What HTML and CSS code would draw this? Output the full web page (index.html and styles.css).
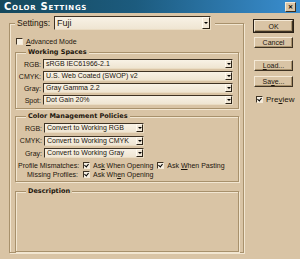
FILE: index.html
```html
<!DOCTYPE html>
<html lang="en">
<head>
    <meta charset="UTF-8">
    <title>Color Settings</title>
    <link rel="stylesheet" href="styles.css">
</head>
<body>
    <div class="titlebar">
        <span class="title">Color Settings</span>
        <span class="close-btn">&#x2715;</span>
    </div>

    <div class="dialog-body">
        <fieldset class="main-box">
            <legend class="settings-legend">
                <span class="settings-label">Settings:</span>
                <span class="select select-settings">Fuji<span class="arrow"></span></span>
            </legend>

            <div class="check-row advanced">
                <span class="checkbox"></span>
                <span><u>A</u>dvanced Mode</span>
            </div>

            <fieldset class="group">
                <legend>Working Spaces</legend>
                <div class="field-grid ws-grid">
                    <span class="field-label">RGB:</span>
                    <span class="select">sRGB IEC61966-2.1<span class="arrow"></span></span>
                    <span class="field-label">CMYK:</span>
                    <span class="select">U.S. Web Coated (SWOP) v2<span class="arrow"></span></span>
                    <span class="field-label">Gray:</span>
                    <span class="select">Gray Gamma 2.2<span class="arrow"></span></span>
                    <span class="field-label">Spot:</span>
                    <span class="select">Dot Gain 20%<span class="arrow"></span></span>
                </div>
            </fieldset>

            <fieldset class="group policies">
                <legend>Color Management Policies</legend>
                <div class="field-grid policy-grid">
                    <span class="field-label">RGB:</span>
                    <span class="select">Convert to Working RGB<span class="arrow"></span></span>
                    <span class="field-label">CMYK:</span>
                    <span class="select">Convert to Working CMYK<span class="arrow"></span></span>
                    <span class="field-label">Gray:</span>
                    <span class="select">Convert to Working Gray<span class="arrow"></span></span>
                </div>
                <div class="policy-checks">
                    <div class="policy-row">
                        <span class="policy-label">Profile Mismatches:</span>
                        <span class="checkbox checked"></span>
                        <span class="opt-text">As<u>k</u> When Opening</span>
                        <span class="checkbox checked"></span>
                        <span class="opt-text">Ask <u>W</u>hen Pasting</span>
                    </div>
                    <div class="policy-row">
                        <span class="policy-label">Missing Profiles:</span>
                        <span class="checkbox checked"></span>
                        <span class="opt-text">Ask Wh<u>e</u>n Opening</span>
                    </div>
                </div>
            </fieldset>

            <fieldset class="group description">
                <legend>Description</legend>
            </fieldset>
        </fieldset>

        <div class="buttons">
            <button class="btn btn-default">OK</button>
            <button class="btn">Cancel</button>
            <button class="btn btn-gap"><u>L</u>oad...</button>
            <button class="btn">Sa<u>v</u>e...</button>
            <div class="check-row preview">
                <span class="checkbox checked"></span>
                <span>Pre<u>v</u>iew</span>
            </div>
        </div>
    </div>
</body>
</html>
```

FILE: styles.css
```css
body {
    margin: 0;
    width: 300px;
    height: 259px;
    overflow: hidden;
    background: #d9c4a5;
    color: #1c150c;
    font-family: "Liberation Sans", Arial, sans-serif;
    font-size: 7px;
}
.titlebar {
    height: 13px;
    display: flex;
    align-items: center;
    justify-content: space-between;
    padding: 0 4px 0 4px;
    background: linear-gradient(to right, #15485c, #1c5b7e 45%, #3a8ed0);
}
.title {
    color: #fff;
    font-family: "DejaVu Sans", sans-serif;
    font-weight: bold;
    font-size: 10px;
    font-variant: small-caps;
    letter-spacing: 0.7px;
    line-height: 13px;
}
.close-btn {
    width: 9px;
    height: 8px;
    background: #d9c4a5;
    border: 1px solid;
    border-color: #f4e9d6 #3b2f20 #3b2f20 #f4e9d6;
    color: #000;
    font-size: 6px;
    font-weight: bold;
    line-height: 8px;
    text-align: center;
}
.dialog-body {
    display: flex;
    align-items: flex-start;
}
fieldset {
    margin: 0;
    min-width: 0;
    border: 1px solid #a8916c;
    box-shadow: inset 1px 1px 0 #f2e6d1, 1px 1px 0 #f2e6d1;
}
legend {
    padding: 0 2px;
    background: #d9c4a5;
}
.main-box {
    margin: 3px 0 0 9px;
    width: 235px;
    height: 237px;
    box-sizing: border-box;
    padding: 4px 4px 4px 5px;
}
.settings-legend {
    display: flex;
    align-items: center;
    gap: 4px;
    padding: 0 4px 0 2px;
    font-size: 8.5px;
}
.select {
    position: relative;
    display: block;
    height: 10px;
    box-sizing: border-box;
    padding: 0 10px 0 2px;
    border: 1px solid;
    border-color: #3e3223 #eadcc3 #eadcc3 #3e3223;
    background: linear-gradient(#f8f2e6, #efe5d2);
    line-height: 8px;
    white-space: nowrap;
    overflow: hidden;
}
.select-settings {
    width: 157px;
    height: 14px;
    line-height: 12px;
    font-size: 9px;
}
.arrow {
    position: absolute;
    right: 0;
    top: 0;
    bottom: 0;
    width: 7px;
    box-sizing: border-box;
    background: #f1e7d6;
    border: 1px solid;
    border-color: #fffaf0 #2c2316 #2c2316 #fffaf0;
}
.arrow::after {
    content: "";
    position: absolute;
    left: 1px;
    top: 2px;
    border-left: 2px solid transparent;
    border-right: 2px solid transparent;
    border-top: 2px solid #000;
}
.select-settings .arrow {
    width: 8px;
}
.select-settings .arrow::after {
    top: 4px;
}
.checkbox {
    position: relative;
    display: inline-block;
    flex: none;
    width: 7px;
    height: 7px;
    box-sizing: border-box;
    border: 1px solid;
    border-color: #3e3223 #f4e9d6 #f4e9d6 #3e3223;
    background: #f6efe2;
}
.checkbox.checked::after {
    content: "";
    position: absolute;
    left: 1px;
    top: 0;
    width: 2px;
    height: 3px;
    border: solid #000;
    border-width: 0 1px 1px 0;
    transform: rotate(40deg);
}
.check-row {
    display: flex;
    align-items: center;
    gap: 3px;
}
.advanced {
    margin: 4px 0 3px 1px;
}
.group {
    padding: 2px 5px 3px 2px;
}
.group legend {
    margin-left: 8px;
    font-family: "DejaVu Sans", sans-serif;
    font-weight: bold;
    font-size: 6.5px;
    line-height: 9px;
}
.field-grid {
    display: grid;
    align-items: center;
    row-gap: 2px;
    column-gap: 2px;
}
.ws-grid {
    grid-template-columns: 23px 1fr;
}
.field-label {
    text-align: right;
}
.policies {
    margin-top: 3px;
    padding-bottom: 2px;
}
.policy-grid {
    grid-template-columns: 24px 100px;
    row-gap: 2.5px;
}
.policy-checks {
    margin-top: 3px;
}
.policy-row {
    display: flex;
    align-items: center;
    height: 9px;
    white-space: nowrap;
}
.policy-label {
    flex: none;
    width: 60px;
    margin-right: 5px;
    text-align: right;
}
.opt-text {
    margin: 0 4px 0 3px;
}
.description {
    margin-top: 5px;
    height: 65px;
    box-sizing: border-box;
}
.buttons {
    display: flex;
    flex-direction: column;
    margin: 7px 0 0 10px;
    width: 39px;
}
.btn {
    height: 11px;
    margin: 0 0 5px 0;
    padding: 0;
    box-sizing: border-box;
    font-family: "Liberation Sans", Arial, sans-serif;
    font-size: 7px;
    line-height: 9px;
    color: #1c150c;
    background: #d9c4a5;
    border: 1px solid;
    border-color: #f4e9d6 #3e3223 #3e3223 #f4e9d6;
    box-shadow: inset -1px -1px 0 #a8916c;
}
.btn-default {
    height: 12px;
    outline: 1px solid #2a2116;
}
.btn-gap {
    margin-top: 7px;
}
.preview {
    margin: 3px 0 0 2px;
    font-size: 8px;
}
```
